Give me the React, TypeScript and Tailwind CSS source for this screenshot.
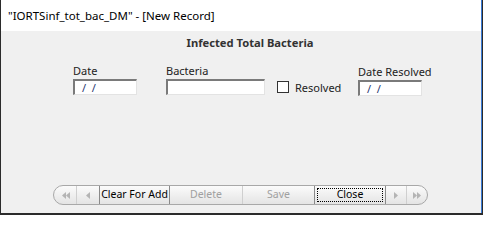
import React from "react";

const FONT = { fontFamily: '"Noto Sans", "Open Sans", Arial, sans-serif' };

function DateBox({ width }: { width: string }) {
  return (
    <div
      className={`${width} h-[16px] bg-white border-t-2 border-l-2 border-b border-r border-t-[#7a7a7a] border-l-[#7a7a7a] border-b-[#e3e3e3] border-r-[#e3e3e3] flex items-center pl-[7px] text-[11px] leading-none text-[#2a3670]`}
    >
      /&nbsp;&nbsp;/
    </div>
  );
}

function Arrow({ dir, double }: { dir: "left" | "right"; double?: boolean }) {
  const tri = (x: number) =>
    dir === "left" ? `${x + 4},0 ${x + 4},7 ${x},3.5` : `${x},0 ${x},7 ${x + 4},3.5`;
  return (
    <svg width={double ? 8 : 5} height="7" viewBox={`0 0 ${double ? 8 : 5} 7`}>
      <polygon points={tri(0)} fill="#b4b4b4" />
      {double && <polygon points={tri(4)} fill="#b4b4b4" />}
    </svg>
  );
}

export default function App() {
  return (
    <div
      className="w-[483px] h-[215px] flex flex-col border-l border-r border-b-2 border-l-[#2b2b2b] border-r-[#2b2b2b] border-b-[#2b2b2b] overflow-hidden"
      style={FONT}
    >
      <div className="h-[31px] shrink-0 bg-white flex items-center pl-[7px] text-[11.5px] text-black border-r border-r-[#3a7bd5] whitespace-nowrap">
        "IORTSinf_tot_bac_DM" - [New Record]
      </div>
      <div className="flex-1 bg-[#f0f0f0] flex flex-col border-r border-r-[#3a7bd5]">
        <div className="mt-[3px] text-center text-[11.2px] font-bold text-[#333] pl-[18px] leading-[18px] whitespace-nowrap">
          Infected Total Bacteria
        </div>
        <div className="mt-[12px] flex items-end pl-[72px] text-[11px] text-[#222] whitespace-nowrap">
          <div className="flex flex-col">
            <span className="leading-[14px] mb-[1px]">Date</span>
            <DateBox width="w-[64px]" />
          </div>
          <div className="flex flex-col ml-[29px]">
            <span className="leading-[14px] mb-[1px]">Bacteria</span>
            <div className="w-[99px] h-[16px] bg-white border-t-2 border-l-2 border-b border-r border-t-[#7a7a7a] border-l-[#7a7a7a] border-b-[#e3e3e3] border-r-[#e3e3e3]" />
          </div>
          <div className="flex items-center ml-[12px] h-[16px] w-[81px]">
            <div className="w-[12px] h-[12px] bg-white border border-[#333]" />
            <span className="ml-[6px] leading-none">Resolved</span>
          </div>
          <div className="flex flex-col -mb-[1px]">
            <span className="leading-[14px] mb-[1px]">Date Resolved</span>
            <DateBox width="w-[64px]" />
          </div>
        </div>
        <div className="mt-auto mb-[8px] ml-[52px] w-[375px] h-[20px] flex rounded-full border border-[#a8a8a8] bg-gradient-to-b from-[#fbfbfb] to-[#e4e4e4] text-[10.5px] overflow-hidden whitespace-nowrap">
          <div className="w-[23px] shrink-0 flex items-center justify-center border-r border-[#cfcfcf] pl-[2px]">
            <Arrow dir="left" double />
          </div>
          <div className="w-[22px] shrink-0 flex items-center justify-center">
            <Arrow dir="left" />
          </div>
          <div className="w-[71px] shrink-0 flex items-center justify-center border border-[#8a8a8a] -my-[1px] text-black">
            Clear For Add
          </div>
          <div className="w-[73px] shrink-0 flex items-center justify-center border-r border-[#cfcfcf] text-[#a0a0a0]">
            Delete
          </div>
          <div className="w-[71px] shrink-0 flex items-center justify-center text-[#a0a0a0]">Save</div>
          <div className="w-[72px] shrink-0 flex items-center justify-center border border-[#8a8a8a] -my-[1px] p-[2px]">
            <div className="w-full h-full flex items-center justify-center border border-dotted border-black text-black">
              Close
            </div>
          </div>
          <div className="w-[21px] shrink-0 flex items-center justify-center border-r border-[#cfcfcf]">
            <Arrow dir="right" />
          </div>
          <div className="w-[22px] shrink-0 flex items-center justify-center pr-[2px]">
            <Arrow dir="right" double />
          </div>
        </div>
      </div>
    </div>
  );
}
